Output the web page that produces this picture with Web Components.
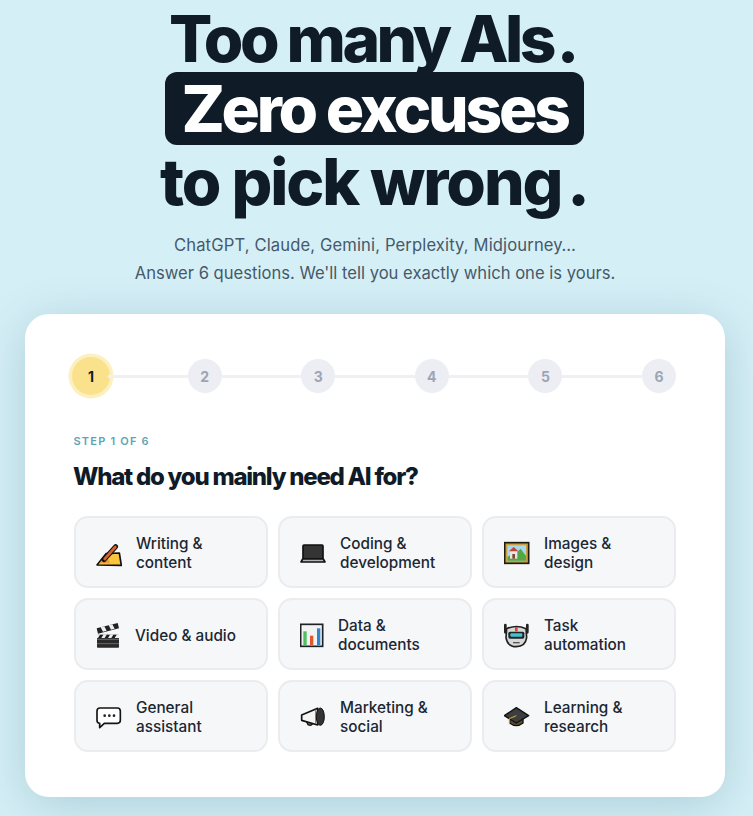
<!DOCTYPE html>
<html lang="en">
<head>
<meta charset="utf-8">
<title>Pick your AI</title>
<style>
  html, body { margin: 0; padding: 0; height: 816px; overflow: hidden; }
  body {
    background: #d5eff6;
    font-family: 'Inter', 'Liberation Sans', sans-serif;
    color: #0f1c28;
  }
  ai-page { width: 750px; }
  .dot1 { margin-left: 4px; }
  .dot3 { margin-left: 6px; }
</style>
</head>
<body>
<ai-page>
  <ai-hero>
    <span slot="line1">Too many AIs<span class="dot1">.</span></span>
    <span slot="pill">Zero excuses</span>
    <span slot="line3">to pick wrong<span class="dot3">.</span></span>
    <span slot="sub1">ChatGPT, Claude, Gemini, Perplexity, Midjourney…</span>
    <span slot="sub2">Answer 6 questions. We'll tell you exactly which one is yours.</span>
  </ai-hero>
  <ai-card>
    <ai-stepper slot="stepper" current="1" total="6"></ai-stepper>
    <span slot="label">STEP 1 OF 6</span>
    <span slot="question">What do you mainly need AI for?</span>
    <ai-option>
      <svg slot="icon" width="26" height="32" viewBox="78 78 78 96"><path d="M81 165 L108 131 L148 129 L154 166 Z" fill="#f9c53f" stroke="#111" stroke-width="5" stroke-linejoin="round"/><path d="M88 160 L110 136 L120 160 Z" fill="#ef9a2c"/><path d="M102 149 L137 110" stroke="#111" stroke-width="15" stroke-linecap="round"/><path d="M104 147 L136 111" stroke="#d9622b" stroke-width="8" stroke-linecap="round"/></svg>
      Writing &amp;<br>content
    </ai-option>
    <ai-option>
      <svg slot="icon" width="26" height="32" viewBox="75 78 78 96"><rect x="84" y="105" width="60" height="42" rx="3" fill="#343434" stroke="#111" stroke-width="5"/><path d="M83 147 H145 L150 156 H78 Z" fill="#b4b4b4" stroke="#111" stroke-width="5" stroke-linejoin="round"/></svg>
      Coding &amp;<br>development
    </ai-option>
    <ai-option>
      <svg slot="icon" width="26" height="32" viewBox="72 78 78 96"><rect x="74" y="98" width="72" height="62" fill="#c9a13f" stroke="#1d1a10" stroke-width="5"/><rect x="82" y="106" width="56" height="46" fill="#a9d8ee"/><path d="M82 152 V140 L108 128 L122 116 L138 138 V152 Z" fill="#53a843"/><rect x="90" y="122" width="22" height="24" fill="#e9e5e0"/><path d="M87 124 L101 111 L115 124 Z" fill="#c0413d"/><rect x="97" y="132" width="8" height="14" fill="#7a4a35"/></svg>
      Images &amp;<br>design
    </ai-option>
    <ai-option>
      <svg slot="icon" width="25" height="32" viewBox="78 69 75 96"><rect x="81" y="119" width="66" height="39" rx="2" fill="#2a2a2a"/><path d="M81 133 H147 M81 146 H147" stroke="#8b8b8b" stroke-width="2"/><path d="M81 119 H147 V129 H81 Z" fill="#eee"/><path d="M90 119 L84 129 H94 L100 119 Z M110 119 L104 129 H114 L120 119 Z M130 119 L124 129 H134 L140 119 Z" fill="#1b1b1b"/><path d="M80 100 L143 84 L147 100 L84 116 Z" fill="#222"/><path d="M92 97 L103 94 L110 107 L99 110 Z M116 91 L127 88 L134 101 L123 104 Z" fill="#eee"/></svg>
      Video &amp; audio
    </ai-option>
    <ai-option>
      <svg slot="icon" width="24" height="32" viewBox="75 69 72 96"><rect x="77" y="88" width="66" height="66" fill="#f3f3f3" stroke="#1d2226" stroke-width="5"/><rect x="85" y="109" width="10" height="41" fill="#4fbf60"/><rect x="105" y="122" width="10" height="28" fill="#dd5a2f"/><rect x="126" y="100" width="10" height="50" fill="#2f86c9"/></svg>
      Data &amp;<br>documents
    </ai-option>
    <ai-option>
      <svg slot="icon" width="26" height="32" viewBox="72 69 78 96"><path d="M76 90 V112 M142 90 V112" stroke="#222" stroke-width="8" stroke-linecap="round"/><path d="M80 101 Q109 88 138 101 L140 128 Q136 155 109 155 Q82 155 78 128 Z" fill="#d8d8d8" stroke="#222" stroke-width="5"/><rect x="105" y="96" width="8" height="13" fill="#d8492f"/><rect x="85" y="110" width="48" height="21" rx="5" fill="#222"/><rect x="91" y="115" width="36" height="10" rx="3" fill="#3fc3d1"/><path d="M99 143 H119" stroke="#555" stroke-width="4"/></svg>
      Task<br>automation
    </ai-option>
    <ai-option>
      <svg slot="icon" width="26" height="32" viewBox="78 315 78 96"><path d="M90 339 H142 Q151 339 151 348 V376 Q151 385 142 385 H103 L89 398 V385 Q81 385 81 376 V348 Q81 339 90 339 Z" fill="#fff" stroke="#151515" stroke-width="5" stroke-linejoin="round"/><circle cx="104" cy="362" r="4" fill="#222"/><circle cx="118" cy="362" r="4" fill="#222"/><circle cx="132" cy="362" r="4" fill="#222"/></svg>
      General<br>assistant
    </ai-option>
    <ai-option>
      <svg slot="icon" width="26" height="32" viewBox="75 315 78 96"><path d="M94 378 L99 389 Q108 394 113 386 L110 378 Z" fill="#888" stroke="#111" stroke-width="4"/><path d="M80 360 L128 340 V390 L80 376 Z" fill="#f4f4f4" stroke="#111" stroke-width="5" stroke-linejoin="round"/><path d="M122 344 V387" stroke="#d9453a" stroke-width="3"/><ellipse cx="136" cy="365" rx="12" ry="26" fill="#333" stroke="#111" stroke-width="3"/></svg>
      Marketing &amp;<br>social
    </ai-option>
    <ai-option>
      <svg slot="icon" width="26" height="32" viewBox="72 315 78 96"><path d="M89 368 V384 Q109 400 129 384 V368 Z" fill="#5b4b2a" stroke="#111" stroke-width="4"/><path d="M73 362 L109 338 L146 362 L109 384 Z" fill="#3b3d3f" stroke="#111" stroke-width="4" stroke-linejoin="round"/><path d="M109 362 L88 371 V388" stroke="#d9ad3c" stroke-width="3" fill="none"/></svg>
      Learning &amp;<br>research
    </ai-option>
  </ai-card>
</ai-page>

<script>
class AiPage extends HTMLElement {
  connectedCallback() {
    this.attachShadow({ mode: 'open' });
    this.shadowRoot.innerHTML = `
      <style>
        :host { display: flex; flex-direction: column; align-items: center; }
      </style>
      <slot></slot>
    `;
  }
}

class AiHero extends HTMLElement {
  connectedCallback() {
    this.attachShadow({ mode: 'open' });
    this.shadowRoot.innerHTML = `
      <style>
        :host {
          display: flex;
          flex-direction: column;
          align-items: center;
          text-align: center;
          height: 314px;
        }
        .title {
          font-size: 64px;
          font-weight: 800;
          color: #0f1c28;
          display: flex;
          flex-direction: column;
          align-items: center;
        }
        .one {
          margin: 6px 0 0 -5px;
          height: 66px;
          line-height: 66px;
          letter-spacing: -3.5px;
        }
        .pill {
          background: #0f1c28;
          color: #fff;
          border-radius: 12px;
          height: 73px;
          line-height: 73px;
          padding: 0 16px;
          margin-left: -1px;
          letter-spacing: -3.25px;
        }
        .three {
          margin: 1px 0 0 -2px;
          height: 72px;
          line-height: 72px;
          letter-spacing: -2.05px;
        }
        .sub {
          margin-top: 13px;
          font-size: 16.6px;
          line-height: 28px;
          color: #46596a;
        }
        .sub span { display: block; }
        .sub span:first-child { letter-spacing: 0.13px; }
      </style>
      <div class="title">
        <div class="one"><slot name="line1"></slot></div>
        <div class="pill"><slot name="pill"></slot></div>
        <div class="three"><slot name="line3"></slot></div>
      </div>
      <div class="sub">
        <span><slot name="sub1"></slot></span>
        <span><slot name="sub2"></slot></span>
      </div>
    `;
  }
}

class AiCard extends HTMLElement {
  connectedCallback() {
    this.attachShadow({ mode: 'open' });
    this.shadowRoot.innerHTML = `
      <style>
        :host {
          display: block;
          box-sizing: border-box;
          width: 700px;
          height: 483px;
          padding: 40px 49px 0 49px;
          background: #fff;
          border-radius: 24px;
          box-shadow: 0 8px 48px rgba(15, 80, 100, 0.2);
        }
        .label {
          margin-top: 36px;
          margin-left: -0.5px;
          font-size: 11px;
          font-weight: 600;
          letter-spacing: 1.2px;
          line-height: 14px;
          color: #5ea5b4;
        }
        .question {
          margin-top: 13px;
          margin-left: -1px;
          font-size: 24px;
          font-weight: 800;
          letter-spacing: -1.25px;
          line-height: 32px;
          color: #0f1c28;
        }
        .grid {
          margin-top: 23px;
          display: grid;
          grid-template-columns: repeat(3, 1fr);
          grid-auto-rows: 72px;
          gap: 10px;
        }
      </style>
      <slot name="stepper"></slot>
      <div class="label"><slot name="label"></slot></div>
      <div class="question"><slot name="question"></slot></div>
      <div class="grid"><slot></slot></div>
    `;
  }
}

class AiStepper extends HTMLElement {
  connectedCallback() {
    this.attachShadow({ mode: 'open' });
    const total = Number(this.getAttribute('total'));
    const current = Number(this.getAttribute('current'));
    let html = '';
    for (let i = 1; i <= total; i++) {
      html += `<div class="dot ${i === current ? 'on' : ''}">${i}</div>`;
      if (i < total) html += '<div class="line"></div>';
    }
    this.shadowRoot.innerHTML = `
      <style>
        :host { display: flex; align-items: center; height: 44px; }
        .dot {
          flex: none;
          width: 34px;
          height: 34px;
          border-radius: 50%;
          background: #eceef3;
          color: #9ca5b5;
          display: flex;
          align-items: center;
          justify-content: center;
          font-size: 14px;
          font-weight: 700;
        }
        .dot.on {
          width: 38px;
          height: 38px;
          margin: 0 -2px 0 -2px;
          background: #fae28d;
          color: #0f1c28;
          box-shadow: 0 0 0 3.5px #fdf0c0;
        }
        .line { flex: 1; height: 3px; background: #eef0f4; }
      </style>
      ${html}
    `;
  }
}

class AiOption extends HTMLElement {
  connectedCallback() {
    this.attachShadow({ mode: 'open' });
    this.shadowRoot.innerHTML = `
      <style>
        :host {
          display: flex;
          align-items: center;
          gap: 14px;
          box-sizing: border-box;
          padding: 0 20px;
          background: #f6f7f9;
          border: 2px solid #eaecef;
          border-radius: 14px;
          font-size: 15.3px;
          font-weight: 450;
          line-height: 19px;
          color: #1b2733;
        }
        .icon { flex: none; display: flex; }
        .text { padding-top: 2px; }
      </style>
      <div class="icon"><slot name="icon"></slot></div>
      <div class="text"><slot></slot></div>
    `;
  }
}

customElements.define('ai-page', AiPage);
customElements.define('ai-hero', AiHero);
customElements.define('ai-card', AiCard);
customElements.define('ai-stepper', AiStepper);
customElements.define('ai-option', AiOption);
</script>
</body>
</html>
